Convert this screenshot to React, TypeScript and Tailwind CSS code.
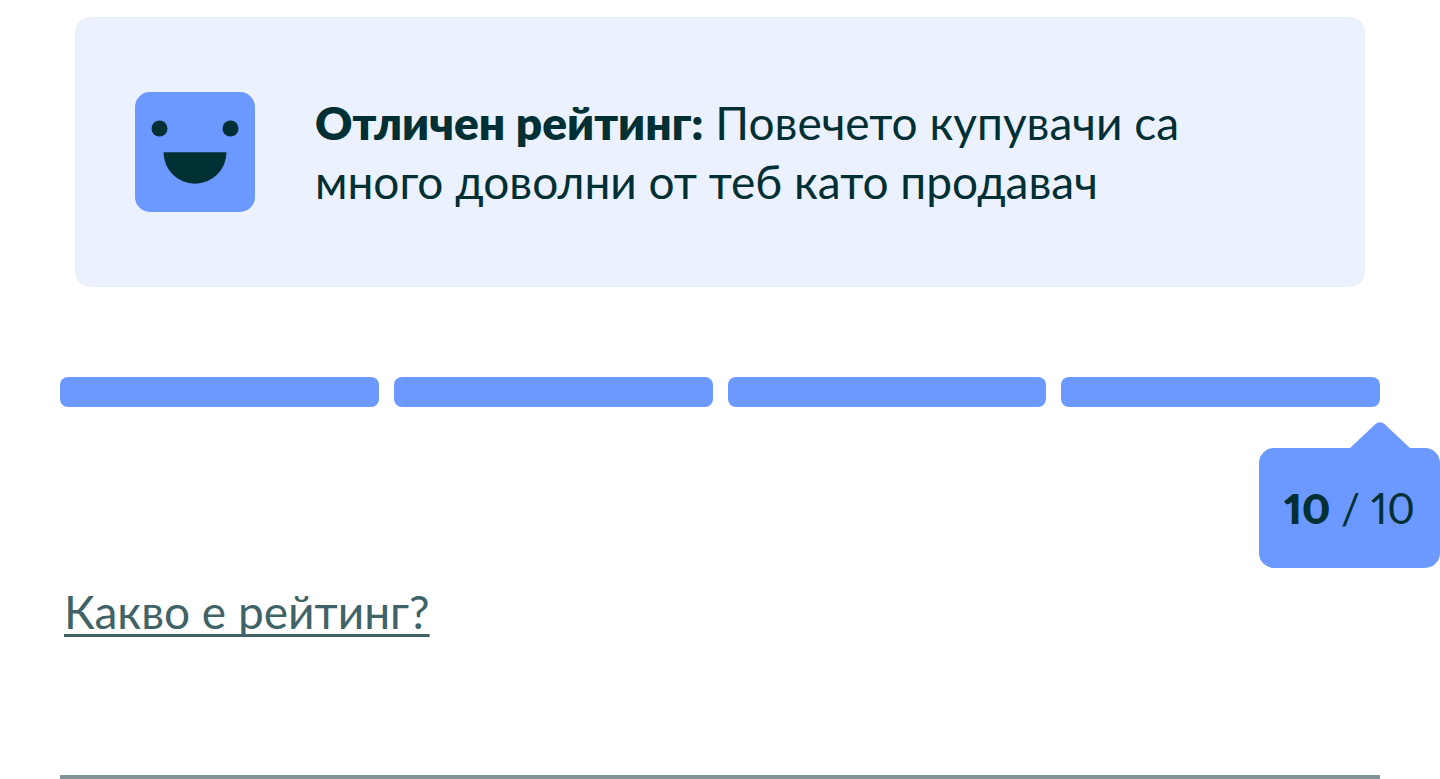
const SEGMENTS = 4;

function HappyFace() {
  return (
    <svg viewBox="0 0 120 120" className="size-[120px] shrink-0" aria-hidden="true">
      <rect width="120" height="120" rx="15" fill="#6c99ff" />
      <circle cx="24.5" cy="36.5" r="8" fill="#002f34" />
      <circle cx="95.5" cy="36.5" r="8" fill="#002f34" />
      <path d="M28.5 60.2h63a31.5 31.5 0 0 1-63 0z" fill="#002f34" />
    </svg>
  );
}

function ScoreBubble({ score, max }: { score: number; max: number }) {
  return (
    <div className="flex flex-col items-end self-end">
      <svg viewBox="0 0 62 27" className="mr-[29px] h-[27px] w-[62px] -mb-px" aria-hidden="true">
        <path d="M0 27 26 2.5Q31-2 36 2.5L62 27z" fill="#6c99ff" />
      </svg>
      <div className="flex h-[120px] min-w-[181px] items-center justify-center rounded-[15px] bg-[#6c99ff] px-6">
        <p className="whitespace-nowrap text-[42px] proportional-nums">
          <strong className="font-extrabold">{score}</strong> / {max}
        </p>
      </div>
    </div>
  );
}

export default function App() {
  return (
    <main className="flex flex-col bg-white pt-[17px] font-['Lato','Noto_Sans',sans-serif] text-[46px] leading-[59px] text-[#002f34]">
      <section className="mx-[75px] flex min-h-[270px] items-center gap-[60px] rounded-[15px] bg-[#ebf1ff] px-[60px]">
        <HappyFace />
        <p className="max-w-[920px]">
          <strong className="font-extrabold">Отличен рейтинг:</strong> Повечето купувачи са много доволни от теб като продавач
        </p>
      </section>

      <div
        className="mx-[60px] mt-[90px] flex gap-[15px]"
        role="meter"
        aria-label="Рейтинг"
        aria-valuemin={0}
        aria-valuemax={10}
        aria-valuenow={10}
      >
        {Array.from({ length: SEGMENTS }, (_, i) => (
          <div key={i} className="h-[30px] flex-1 rounded-lg bg-[#6c99ff]" />
        ))}
      </div>

      <div className="mt-[15px] flex flex-col">
        <ScoreBubble score={10} max={10} />
      </div>

      <a
        href="#rating"
        className="mt-[14px] ml-16 self-start text-[#406367] underline decoration-[3px] underline-offset-[5px] [text-decoration-skip-ink:none]"
      >
        Какво е рейтинг?
      </a>

      <hr className="mx-[60px] mt-[134px] border-t-4 border-[#829496]" />
    </main>
  );
}
